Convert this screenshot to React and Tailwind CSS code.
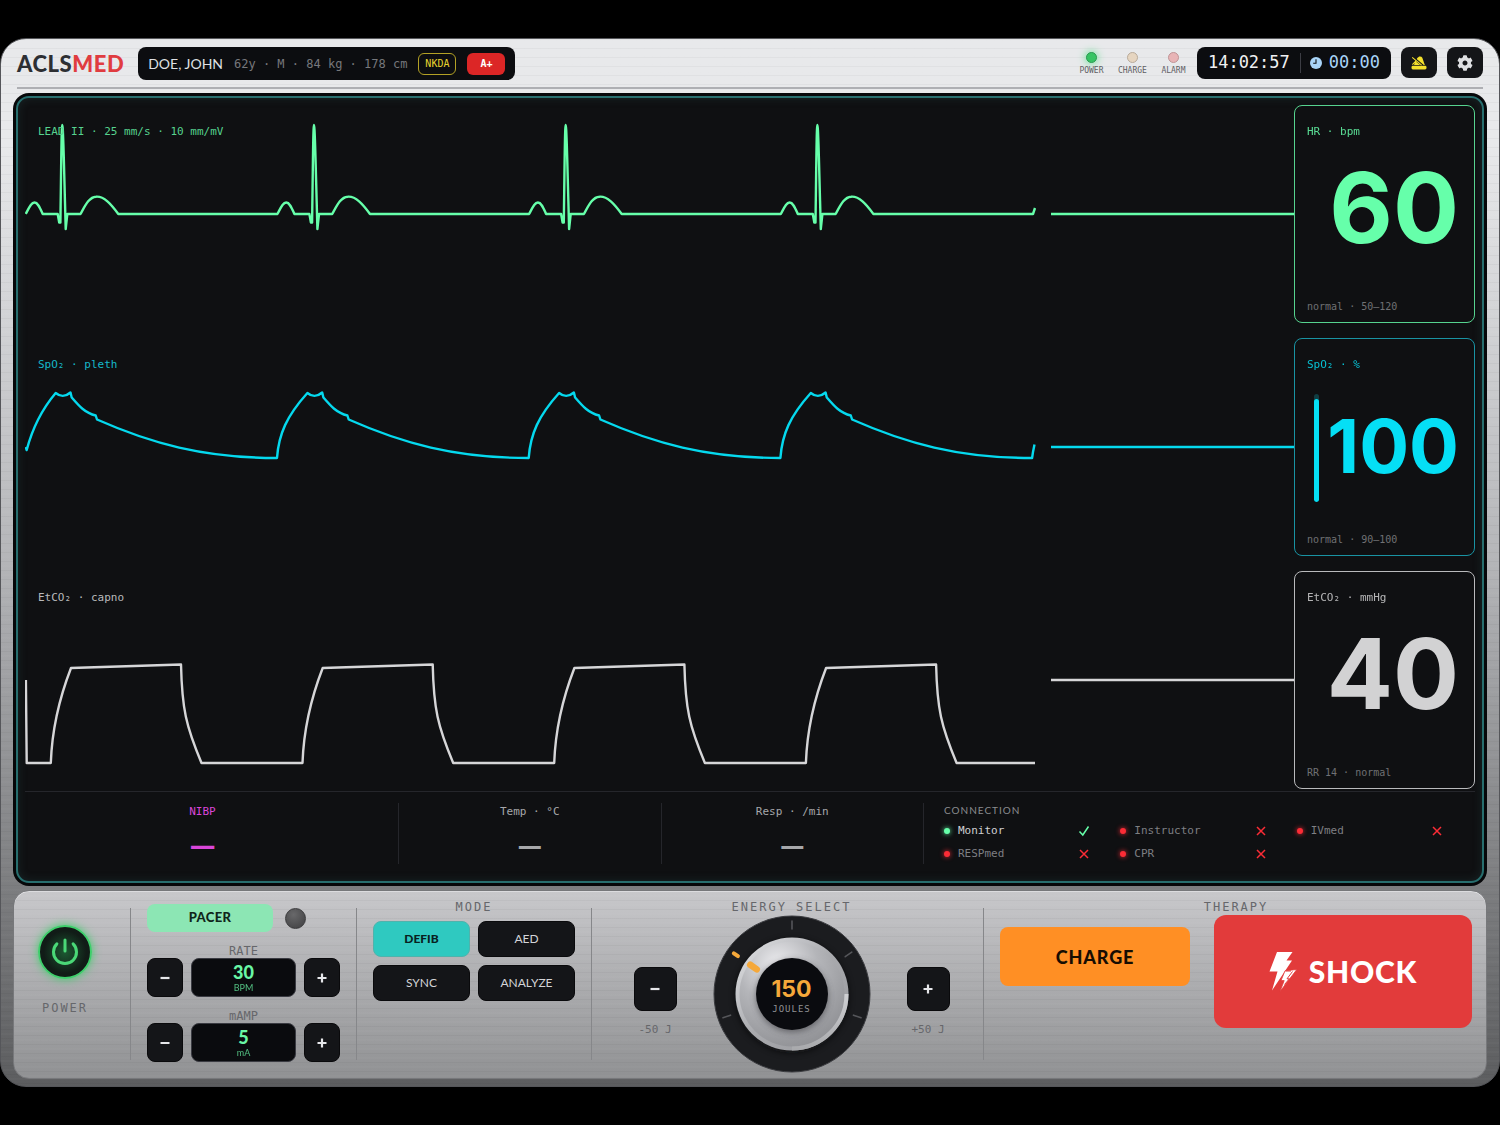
import React, { useState } from 'react';
import { FaCog } from 'react-icons/fa';

const SANS = "font-['Lato','Liberation_Sans',sans-serif]";
const DIGITS = "font-['Inter','Lato',sans-serif]";
const MONO = "font-['DejaVu_Sans_Mono','Liberation_Mono',monospace]";

const BRUSHED = 'bg-[repeating-linear-gradient(180deg,rgba(0,0,0,0.035)_0px,rgba(0,0,0,0.035)_1px,transparent_1px,transparent_4px,rgba(255,255,255,0.04)_5px,transparent_6px,transparent_9px)]';

const BEATS = [0, 1, 2, 3];
const PERIOD = 251.7;

const LEDS = [
    { label: 'POWER', style: 'bg-[#36c463] border-[#2a9a50] shadow-[0_0_8px_#4ade80]' },
    { label: 'CHARGE', style: 'bg-[#e6d5c0] border-[#b9ab9b]' },
    { label: 'ALARM', style: 'bg-[#e8b4b6] border-[#bf9496]' },
];

const CONNECTIONS = [
    { name: 'Monitor', online: true },
    { name: 'Instructor', online: false },
    { name: 'IVmed', online: false },
    { name: 'RESPmed', online: false },
    { name: 'CPR', online: false },
];

const MODES = ['DEFIB', 'AED', 'SYNC', 'ANALYZE'];

const ecgPath = BEATS.map(i => {
    const x = i * PERIOD;
    const p = n => x + n;
    return `${i === 0 ? 'M' : 'L'}${p(0.7)} 109 C${p(4)} 103 ${p(6)} 97.5 ${p(9.5)} 97.5 S${p(15)} 103 ${p(17.7)} 109 L${p(32.7)} 109 L${p(34.2)} 117.5 L${p(35.4)} 117.5 C${p(36.2)} 60 ${p(36.5)} 20 ${p(37.3)} 20 S${p(39)} 60 ${p(40.7)} 124 L${p(42.3)} 109 L${p(55.5)} 109 C${p(60)} 101 ${p(64)} 92 ${p(71)} 91.7 C${p(79)} 91 ${p(86)} 99 ${p(93.3)} 109 L${p(252)} 109`;
}).join(' ') + ' L1008 109 L1010 103';

const plethPath = 'M0.7 109 L1.7 112 C8 88 18 70 30.7 55 ' + BEATS.map(i => {
    const x = i * PERIOD;
    const p = n => x + n;
    const rise = i === 0 ? '' : `C${p(2)} 96 ${p(10)} 78 ${p(30.7)} 55 `;
    return `${rise}Q${p(38)} 61 ${p(45.5)} 54.5 L${p(46.7)} 59.5 C${p(54)} 68 ${p(60)} 75 ${p(70.7)} 77.5 L${p(72)} 81.5 C${p(125)} 105 ${p(178)} 120 ${p(252)} 120`;
}).join(' ') + ' L1008 114 L1009.5 106.5';

const capnoPath = 'M0.9 109 L1.7 192 ' + BEATS.map(i => {
    const x = i * PERIOD;
    const p = n => x + n;
    return `L${p(25.8)} 192 C${p(27)} 158 ${p(34)} 128 ${p(46)} 97 L${p(156)} 93.5 C${p(157)} 138 ${p(161)} 155 ${p(176.5)} 192`;
}).join(' ') + ' L1010 192';

const Waveform = ({ path, color, label, labelClass }) => (
    <div className="relative h-[218px] min-w-0 flex-1">
        <svg className="h-full w-full" viewBox="0 0 1269 218" preserveAspectRatio="none" fill="none" stroke={color} strokeWidth="2.4" strokeLinejoin="round">
            <path d={path} vectorEffect="non-scaling-stroke" />
            <path d="M1026 109 H1269" vectorEffect="non-scaling-stroke" />
        </svg>
        <span className={`absolute left-[13px] top-5 text-[11px] leading-[14px] ${MONO} ${labelClass}`}>{label}</span>
    </div>
);

const VitalCard = ({ label, value, note, color, valueClass, rowClass, children }) => (
    <section className={`relative flex h-[218px] w-[181px] shrink-0 flex-col justify-between rounded-lg border px-3 pb-2 pt-[19px] ${color}`}>
        <h2 className={`text-[11px] leading-[14px] opacity-85 ${MONO}`}>{label}</h2>
        <div className={`flex items-center justify-end pr-[3px] ${rowClass}`}>
            {children}
            <p className={`font-bold leading-none ${DIGITS} ${valueClass}`}>{value}</p>
        </div>
        <p className={`text-[10px] leading-[14px] text-[#707174] ${MONO}`}>{note}</p>
    </section>
);

const StepButton = ({ label, sign, onClick, className }) => (
    <button aria-label={label} onClick={onClick} className={`flex items-center justify-center border border-[#0a0a0c] bg-[#141518] text-[#e6e7ea] ${className}`}>
        <svg width="10" height="10" viewBox="0 0 10 10" stroke="currentColor" strokeWidth="2.2">
            <path d={sign === '+' ? 'M0.5 5 H9.5 M5 0.5 V9.5' : 'M0.5 5 H9.5'} />
        </svg>
    </button>
);

const PacerRow = ({ label, value, unit, onMinus, onPlus }) => (
    <div className="flex flex-col items-center">
        <span className={`text-xs leading-[14px] text-[#66676b] ${MONO}`}>{label}</span>
        <div className="flex w-full gap-2">
            <StepButton label={`Decrease ${label}`} sign="-" onClick={onMinus} className="h-[39px] w-9 rounded-lg" />
            <output className={`flex h-[39px] flex-1 flex-col items-center justify-center rounded-lg border border-[#3a3b42] bg-[#0a0b0e] pt-[2px] text-[#69f7a5] ${SANS}`}>
                <span className="text-lg font-black leading-[18px]">{value}</span>
                <span className="text-[9px] leading-[14px] opacity-75">{unit}</span>
            </output>
            <StepButton label={`Increase ${label}`} sign="+" onClick={onPlus} className="h-[39px] w-9 rounded-lg" />
        </div>
    </div>
);

const Divider = () => <div className="mb-[18px] mt-[17px] w-px shrink-0 self-stretch bg-[#86878a]" />;

const PanelLabel = ({ children }) => (
    <h3 className={`text-center text-xs leading-[14px] tracking-[2px] text-[#66676b] ${MONO}`}>{children}</h3>
);

const EnergyDial = ({ energy, onChange }) => (
    <div className="relative mt-px h-[158px] w-[158px]">
        <svg width="158" height="158" viewBox="-79 -79 158 158" fill="none">
            <defs>
                <linearGradient id="rim" x1="0" y1="0" x2="1" y2="1">
                    <stop offset="0" stopColor="#e4e5e8" />
                    <stop offset="0.5" stopColor="#a9aaae" />
                    <stop offset="1" stopColor="#97989c" />
                </linearGradient>
                <radialGradient id="knob" cx="0.36" cy="0.22" r="0.85">
                    <stop offset="0" stopColor="#ececef" />
                    <stop offset="0.45" stopColor="#b4b5b9" />
                    <stop offset="1" stopColor="#8e8f93" />
                </radialGradient>
                <linearGradient id="seam" x1="0" y1="0" x2="0" y2="1">
                    <stop offset="0" stopColor="#cfd0d3" />
                    <stop offset="1" stopColor="#a9aaad" />
                </linearGradient>
                <filter id="soft" x="-50%" y="-50%" width="200%" height="200%">
                    <feGaussianBlur stdDeviation="3" />
                </filter>
            </defs>
            <circle r="78" fill="#1b1c1f" stroke="#3b3c40" strokeWidth="1" />
            {[0, 55, 109, 251].map(angle => (
                <path key={angle} d="M0 -73 V-65" transform={`rotate(${angle})`} stroke="#55565a" strokeWidth="1.6" strokeLinecap="round" />
            ))}
            <path d="M0 -71 V-66" transform="rotate(-55)" stroke="#f5a83a" strokeWidth="4" strokeLinecap="round" />
            <circle r="57" cy="2" fill="#08090a" opacity="0.6" filter="url(#soft)" />
            <circle r="56.5" fill="url(#rim)" />
            <circle r="52.5" fill="url(#knob)" />
            <path d="M54.5 0 A54.5 54.5 0 0 1 0 54.5" stroke="url(#seam)" strokeWidth="4" />
            <circle r="36" cy="2" fill="#44454a" opacity="0.7" filter="url(#soft)" />
            <circle r="36" fill="#0a0b0f" />
            <path d="M0 -51 V-43" transform="rotate(-55)" stroke="#f5a83a" strokeWidth="6.5" strokeLinecap="round" />
        </svg>
        <div className="absolute inset-0 flex flex-col items-center justify-center pt-[6px]">
            <span className={`text-[23px] font-bold leading-6 text-[#f5a83a] ${DIGITS}`}>{energy}</span>
            <span className={`text-[9px] leading-4 tracking-[1px] text-[#919296] ${MONO}`}>JOULES</span>
        </div>
        <input type="range" aria-label="Energy in joules" min="0" max="360" step="50" value={energy} onChange={e => onChange(Number(e.target.value))} className="absolute inset-0 h-full w-full cursor-pointer opacity-0" />
    </div>
);

const App = () => {
    const [mode, setMode] = useState('DEFIB');
    const [rate, setRate] = useState(30);
    const [amp, setAmp] = useState(5);
    const [energy, setEnergy] = useState(150);

    return (
        <div className={`flex min-h-screen items-center bg-black ${SANS}`}>
            <main className="w-full overflow-hidden rounded-[26px] border border-[#55565a] bg-linear-to-b from-[#e8e9eb] from-10% via-[#b4b5b8] via-50% to-[#5c5d5f]">
                <div className={`px-3 pb-[7px] pt-2 ${BRUSHED}`}>
                    <header className="mx-1 flex h-[42px] items-start border-b-2 border-[#aeafb3]">
                        <h1 className="mt-[5px] text-[22px] font-black leading-6 tracking-wide text-[#2d2f33]">
                            ACLS<span className="text-[#e03c40]">MED</span>
                        </h1>
                        <div className="ml-[14px] flex h-[33px] items-center gap-[11px] rounded-lg bg-[#0c0d10] px-[10px]">
                            <span className="text-sm text-[#dfe0e3]">DOE, JOHN</span>
                            <span className={`text-xs text-[#77787c] ${MONO}`}>62y · M · 84 kg · 178 cm</span>
                            <span className={`flex h-[22px] w-[38px] items-center justify-center rounded-md border border-[#b3a125] text-[10px] text-[#e8d52f] ${MONO}`}>NKDA</span>
                            <span className={`flex h-[22px] w-[38px] items-center justify-center rounded-md bg-[#dc2626] text-[10px] font-bold text-white ${MONO}`}>A+</span>
                        </div>
                        <ul className="ml-auto mr-[3px] mt-[5px] flex">
                            {LEDS.map(led => (
                                <li key={led.label} className="flex w-[41px] flex-col items-center gap-[3px]">
                                    <span className={`h-[11px] w-[11px] rounded-full border ${led.style}`} />
                                    <span className={`text-[8px] leading-[9px] text-[#5f6064] ${MONO}`}>{led.label}</span>
                                </li>
                            ))}
                        </ul>
                        <div className={`flex h-8 items-center rounded-lg bg-[#0c0d10] px-[11px] text-[17px] ${MONO}`}>
                            <time className="text-[#f0f0f2]">14:02:57</time>
                            <span className="ml-[10px] mr-[9px] h-5 w-px bg-[#3c3d44]" />
                            <svg className="mr-[7px]" width="12" height="12" viewBox="0 0 12 12">
                                <circle cx="6" cy="6" r="6" fill="#a9d4f8" />
                                <path d="M6 2.2 V6.3 H3.2" fill="none" stroke="#0c0d10" strokeWidth="1.1" />
                            </svg>
                            <span className="text-[#a9d4f8]">00:00</span>
                        </div>
                        <button aria-label="Mute alarm" className="ml-[10px] flex h-[31px] w-9 items-center justify-center rounded-lg bg-[#141518]">
                            <svg width="16" height="14" viewBox="0 0 16 14">
                                <path d="M6.3 2 L8.2 0.6 Q10.4 0.2 11.3 1.8 L13.8 9 H3 L4.4 5" fill="#f4e02c" />
                                <path d="M1.2 1 L11.8 9.6" stroke="#141518" strokeWidth="2.4" />
                                <path d="M1.2 1.4 L10.6 9.2 M1.4 8.6 L5 5" stroke="#f4e02c" strokeWidth="1.1" />
                                <rect x="0.5" y="9.8" width="15" height="3.6" rx="1.4" fill="#f4e02c" />
                            </svg>
                        </button>
                        <button aria-label="Settings" className="ml-[10px] flex h-[31px] w-9 items-center justify-center rounded-lg bg-[#141518] text-[#dedfe2]">
                            <FaCog size={16} />
                        </button>
                    </header>

                    <div className="mt-1 rounded-2xl bg-[#060709] p-[3px]">
                        <div className="rounded-[13px] border-2 border-[#276e6e] bg-[#0f1012] px-[7px] pb-[17px] pt-[7px] shadow-[inset_0_0_10px_rgba(45,90,90,0.28)]">
                            <div className="flex flex-col gap-[15px]">
                                <div className="flex">
                                    <Waveform path={ecgPath} color="#66ffaa" label="LEAD II · 25 mm/s · 10 mm/mV" labelClass="text-[#56d38f]" />
                                    <VitalCard label="HR · bpm" value="60" note="normal · 50–120" color="border-[#56d38f] text-[#66ffaa]" valueClass="text-[98px]" rowClass="pb-6" />
                                </div>
                                <div className="flex">
                                    <Waveform path={plethPath} color="#05d9ee" label="SpO₂ · pleth" labelClass="text-[#15b7c9]" />
                                    <VitalCard label="SpO₂ · %" value="100" note="normal · 90–100" color="border-[#1993a3] text-[#05dff5]" valueClass="pb-1 text-[74px]" rowClass="gap-2 pb-[10px]">
                                        <div className="flex h-[108px] w-[5px] flex-col justify-end overflow-hidden rounded-full bg-[#113d42]">
                                            <div className="h-[95%] rounded-full bg-current" />
                                        </div>
                                    </VitalCard>
                                </div>
                                <div className="flex">
                                    <Waveform path={capnoPath} color="#d6d6d8" label="EtCO₂ · capno" labelClass="text-[#b9babc]" />
                                    <VitalCard label="EtCO₂ · mmHg" value="40" note="RR 14 · normal" color="border-[#b9babc] text-[#d2d2d3]" valueClass="text-[98px]" rowClass="pb-6" />
                                </div>
                            </div>

                            <div className="mt-[2px] flex border-t border-[#25262b] pt-[11px]">
                                <div className="flex flex-1 divide-x divide-[#25262b] border-r border-[#25262b]">
                                    <div className="flex w-[374px] flex-col items-center gap-3 pr-[18px] text-[#d946d9]">
                                        <span className={`pt-[2px] text-[11px] leading-[14px] ${MONO}`}>NIBP</span>
                                        <span className="text-[34px] font-black leading-7">—</span>
                                    </div>
                                    <div className="flex flex-1 flex-col items-center gap-3 text-[#a6a7aa]">
                                        <span className={`pt-[2px] text-[11px] leading-[14px] ${MONO}`}>Temp · °C</span>
                                        <span className="text-[32px] font-black leading-7">—</span>
                                    </div>
                                    <div className="flex flex-1 flex-col items-center gap-3 text-[#a6a7aa]">
                                        <span className={`pt-[2px] text-[11px] leading-[14px] ${MONO}`}>Resp · /min</span>
                                        <span className="text-[32px] font-black leading-7">—</span>
                                    </div>
                                </div>
                                <div className="w-[551px] pl-5 pr-8">
                                    <h2 className="text-[10px] leading-[14px] tracking-widest text-[#8a8b8f]">CONNECTION</h2>
                                    <ul className={`mt-1 grid grid-cols-3 gap-x-[30px] gap-y-[3px] text-[11px] leading-5 ${MONO}`}>
                                        {CONNECTIONS.map(item => (
                                            <li key={item.name} className="flex items-center">
                                                <span className={`mr-2 h-[6px] w-[6px] rounded-full ${item.online ? 'bg-[#66ffaa] shadow-[0_0_5px_#66ffaa]' : 'bg-[#fb2c36] shadow-[0_0_5px_#fb2c36]'}`} />
                                                <span className={item.online ? 'text-[#d0d1d4]' : 'text-[#7e7f83]'}>{item.name}</span>
                                                <svg className="ml-auto" width="12" height="12" viewBox="0 0 12 12" fill="none" stroke={item.online ? '#66ffaa' : '#fb2c36'} strokeWidth="1.5">
                                                    <path d={item.online ? 'M1.5 6.5 L4.8 10 L10.5 1.5' : 'M2 2 L10 10 M10 2 L2 10'} />
                                                </svg>
                                            </li>
                                        ))}
                                    </ul>
                                </div>
                            </div>
                        </div>
                    </div>

                    <div className="mt-1 rounded-2xl border border-[#77787b] bg-linear-to-b from-[#c8c8cb] to-[#909193] shadow-[inset_0_1px_0_#e4e4e7]">
                        <div className={`flex h-[187px] rounded-2xl ${BRUSHED}`}>
                            <div className="flex w-[116px] shrink-0 flex-col items-center pr-[14px] pt-[34px]">
                                <button aria-label="Power" className="flex h-[54px] w-[54px] items-center justify-center rounded-full border-2 border-[#3ecf6b] bg-[radial-gradient(circle,#1c5a32,#111c17_60%)] shadow-[0_0_10px_#3ecf6b]">
                                    <svg width="28" height="28" viewBox="0 0 28 28" fill="none" stroke="#4ad877" strokeWidth="3" strokeLinecap="round">
                                        <path d="M14 2 V13 M5.9 5.9 A11.5 11.5 0 1 0 22.1 5.9" />
                                    </svg>
                                </button>
                                <span className={`mt-[22px] text-xs leading-[14px] tracking-[2px] text-[#66676b] ${MONO}`}>POWER</span>
                            </div>
                            <Divider />
                            <div className="flex w-[225px] shrink-0 flex-col px-4 pt-[13px]">
                                <div className="flex items-center gap-3">
                                    <button className="h-7 w-[126px] rounded-lg bg-[#8ce6b4] text-[13px] font-black tracking-wide text-[#10251a]">PACER</button>
                                    <span className="h-[21px] w-[21px] rounded-full border border-[#39393b] bg-[radial-gradient(circle_at_40%_30%,#68686a,#3e3e40)]" />
                                </div>
                                <div className="mt-3 flex flex-col gap-3">
                                    <PacerRow label="RATE" value={rate} unit="BPM" onMinus={() => setRate(rate - 5)} onPlus={() => setRate(rate + 5)} />
                                    <PacerRow label="mAMP" value={amp} unit="mA" onMinus={() => setAmp(amp - 5)} onPlus={() => setAmp(amp + 5)} />
                                </div>
                            </div>
                            <Divider />
                            <div className="w-[234px] shrink-0 px-4 pt-[9px]">
                                <PanelLabel>MODE</PanelLabel>
                                <div className="mt-[7px] grid grid-cols-2 gap-2">
                                    {MODES.map(item => (
                                        <button
                                            key={item}
                                            onClick={() => setMode(item)}
                                            className={`h-9 rounded-lg border text-xs ${mode === item ? 'border-[#4fb3ac] bg-[#2fc9c0] font-black text-[#08211f]' : 'border-[#0a0a0c] bg-[#141518] text-[#d3d4d7]'}`}
                                        >
                                            {item}
                                        </button>
                                    ))}
                                </div>
                            </div>
                            <Divider />
                            <div className="min-w-0 flex-1 pl-2 pt-[9px]">
                                <PanelLabel>ENERGY SELECT</PanelLabel>
                                <div className="flex items-center justify-center gap-9">
                                    <div className="flex flex-col items-center gap-3 pt-4">
                                        <StepButton label="Decrease energy" sign="-" onClick={() => setEnergy(energy - 50)} className="h-[44px] w-[43px] rounded-lg" />
                                        <span className={`text-[11px] leading-[14px] text-[#66676b] ${MONO}`}>-50 J</span>
                                    </div>
                                    <EnergyDial energy={energy} onChange={setEnergy} />
                                    <div className="flex flex-col items-center gap-3 pt-4">
                                        <StepButton label="Increase energy" sign="+" onClick={() => setEnergy(energy + 50)} className="h-[44px] w-[43px] rounded-lg" />
                                        <span className={`text-[11px] leading-[14px] text-[#66676b] ${MONO}`}>+50 J</span>
                                    </div>
                                </div>
                            </div>
                            <Divider />
                            <div className="w-[502px] shrink-0 pl-4 pr-[14px] pt-[9px]">
                                <PanelLabel>THERAPY</PanelLabel>
                                <div className="mt-px flex gap-6">
                                    <button className="mt-3 h-[59px] flex-1 rounded-lg bg-[#ff8f24] text-lg font-black tracking-wider text-[#170d02]">CHARGE</button>
                                    <button className="flex h-[113px] w-[258px] items-center justify-center gap-3 rounded-xl bg-[#e23b3b] text-[30px] font-black tracking-wide text-white">
                                        <svg width="28" height="40" viewBox="0 0 28 40" fill="#fff">
                                            <path d="M8 0 H23.5 L17.5 8.5 H23 L14 22 L3 38.5 L8.5 19.5 H0.5 Z" />
                                            <path d="M16 18.8 L27.8 17.5 L11 39.5 L15.2 28.6 L12 28.6 Z" stroke="#e23b3b" strokeWidth="0.8" />
                                            <path d="M23.5 19.5 L18 26.8 H20.4 L15.5 32.5" fill="none" stroke="#e23b3b" strokeWidth="1" />
                                            <path d="M16.5 19 H22" stroke="#e23b3b" strokeWidth="1" />
                                        </svg>
                                        SHOCK
                                    </button>
                                </div>
                            </div>
                        </div>
                    </div>
                </div>
            </main>
        </div>
    );
};

export default App;
